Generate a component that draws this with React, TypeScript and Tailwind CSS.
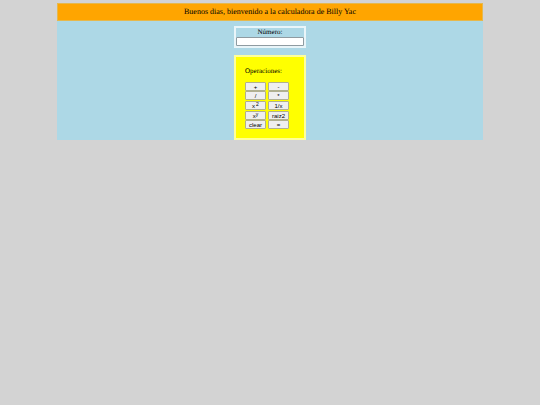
import React, { useState } from 'react';

const rows = [
  [{ id: 'add', label: '+' }, { id: 'sub', label: '-' }],
  [{ id: 'div', label: '/' }, { id: 'mul', label: '*' }],
  [{ id: 'square', label: 'x', sup: '2', spaced: true }, { id: 'inverse', label: '1/x' }],
  [{ id: 'power', label: 'x', sup: 'y' }, { id: 'sqrt', label: 'raiz2' }],
  [{ id: 'clear', label: 'clear' }, { id: 'equals', label: '=' }],
];

const App = () => {
  const [value, setValue] = useState('');
  const [stored, setStored] = useState(0);
  const [pending, setPending] = useState('');

  const handleClick = (id: string) => {
    const n = Number(value);
    if (id === 'clear') {
      setValue('');
      setPending('');
    } else if (id === 'square') {
      setValue(String(n * n));
    } else if (id === 'inverse') {
      setValue(String(1 / n));
    } else if (id === 'sqrt') {
      setValue(String(Math.sqrt(n)));
    } else if (id === 'equals') {
      if (pending === 'add') setValue(String(stored + n));
      if (pending === 'sub') setValue(String(stored - n));
      if (pending === 'mul') setValue(String(stored * n));
      if (pending === 'div') setValue(String(stored / n));
      if (pending === 'power') setValue(String(stored ** n));
      setPending('');
    } else {
      setStored(n);
      setPending(id);
      setValue('');
    }
  };

  return (
    <div className="min-h-screen bg-[#d3d3d3] pt-[3px] font-['Liberation_Serif',serif] text-black [text-rendering:geometricPrecision]">
      <div className="mx-auto w-[79%] bg-[#add8e6]">
        <header className="border border-[#e6b84c] bg-[#ffa500] py-[2px] text-center">
          <h1 className="text-[8px] leading-[12px]">Buenos dias, bienvenido a la calculadora de Billy Yac</h1>
        </header>

        <main className="flex flex-col items-center gap-[7px] pt-[5px]">
          {/* Number input */}
          <div className="w-[72px] border-2 border-[#e9f5f9] text-center">
            <label htmlFor="numero" className="block text-[7px] leading-[9px]">Número:</label>
            <input
              id="numero"
              type="text"
              value={value}
              onChange={(e) => setValue(e.target.value)}
              className="block h-[9px] w-full rounded-[1px] border border-[#8f9ba1] bg-white px-px text-[6px] leading-none"
            />
          </div>

          {/* Operations */}
          <div className="w-[72px] border-2 border-[#ffff9a] bg-[#ffff00] px-[9px] pt-[10px] pb-[9px]">
            <h2 className="mb-[6px] text-[7px] leading-[9px]">Operaciones:</h2>
            <div className="flex flex-col font-['Liberation_Sans',sans-serif]">
              {rows.map((row) => (
                <div key={row[0].id} className={`flex items-end gap-[2px] ${row[0].sup ? 'pt-px' : ''}`}>
                  {row.map((op) => (
                    <button
                      key={op.id}
                      type="button"
                      onClick={() => handleClick(op.id)}
                      className="flex h-[9px] w-[21px] items-center justify-center rounded-[1px] border border-[#b0b090] bg-[#efefef] text-[6px] leading-none"
                    >
                      {op.label}
                      {op.sup && <sup className={`top-[-2px] text-[5px] ${op.spaced ? 'ml-px' : ''}`}>{op.sup}</sup>}
                    </button>
                  ))}
                </div>
              ))}
            </div>
          </div>
        </main>
      </div>
    </div>
  );
};

export default App;
